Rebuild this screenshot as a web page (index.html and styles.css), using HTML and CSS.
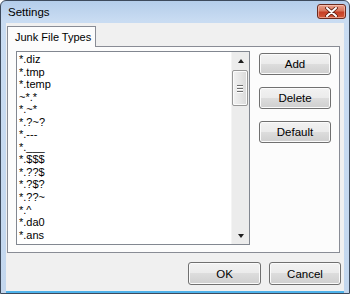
FILE: index.html
```html
<html>

<head>
    <title>Settings</title>
    <link rel="stylesheet" href="styles.css">
</head>

<body>

    <div class="window">
        <div class="titlebar">
            <span class="title">Settings</span>
            <button class="close">
                <svg width="13" height="10" viewBox="0 0 13 10">
                    <path d="M2 1 L11 9 M11 1 L2 9" stroke="#5a1d12" stroke-width="3.6" stroke-linecap="round"/>
                    <path d="M2 1 L11 9 M11 1 L2 9" stroke="#ffffff" stroke-width="2" stroke-linecap="round"/>
                </svg>
            </button>
        </div>

        <div class="client">
            <div class="tabs">
                <div class="tab active">Junk File Types</div>
            </div>

            <div class="panel">
                <div class="listbox">
                    <ul class="items">
                        <li>*.diz</li>
                        <li>*.tmp</li>
                        <li>*.temp</li>
                        <li>~*.*</li>
                        <li>*.~*</li>
                        <li>*.?~?</li>
                        <li>*.---</li>
                        <li>*.___</li>
                        <li>*.$$$</li>
                        <li>*.??$</li>
                        <li>*.?$?</li>
                        <li>*.??~</li>
                        <li>*.^</li>
                        <li>*.da0</li>
                        <li>*.ans</li>
                    </ul>
                    <div class="scrollbar">
                        <div class="arrow"><span class="tri up"></span></div>
                        <div class="track">
                            <div class="thumb">
                                <span class="grip"></span>
                                <span class="grip"></span>
                                <span class="grip"></span>
                            </div>
                        </div>
                        <div class="arrow"><span class="tri down"></span></div>
                    </div>
                </div>

                <div class="side-buttons">
                    <button class="btn">Add</button>
                    <button class="btn">Delete</button>
                    <button class="btn">Default</button>
                </div>
            </div>

            <div class="footer">
                <button class="btn ok">OK</button>
                <button class="btn cancel">Cancel</button>
            </div>
        </div>
    </div>

</body>

</html>
```

FILE: styles.css
```css
body {
    margin: 0;
    background-color: #ffffff;
    font-family: 'Liberation Sans', Arial, sans-serif;
    font-size: 11px;
}

.window {
    box-sizing: border-box;
    width: 350px;
    height: 294px;
    display: flex;
    flex-direction: column;
    border: 1px solid #3d4a5c;
    border-radius: 6px 6px 0 0;
    background: linear-gradient(to bottom, #b4cdea 0px, #c9dcf2 20px, #c3d7ee 100%);
    padding: 0 5px 0 5px;
}

.titlebar {
    height: 22px;
    display: flex;
    justify-content: space-between;
    align-items: flex-start;
    padding: 0 0 0 2px;
    margin-right: -2px;
}

.title {
    margin-top: 5px;
    font-size: 11.5px;
    color: #000000;
}

.close {
    margin-top: 3px;
    width: 29px;
    height: 15px;
    padding: 0;
    border: 1px solid #6b2a1e;
    border-radius: 3px;
    background: linear-gradient(to bottom, #e9a08c 0%, #d8765c 45%, #c63f26 55%, #d35a3a 100%);
    box-shadow: inset 0 0 0 1px rgba(255, 220, 210, 0.5);
    display: flex;
    align-items: center;
    justify-content: center;
}

.client {
    flex: 1;
    display: flex;
    flex-direction: column;
    background-color: #f0f0f0;
    padding: 3px 3px 5px 1px;
    border-bottom: 2px solid #4fb2ea;
}

.tabs {
    display: flex;
    height: 20px;
}

.tab {
    box-sizing: border-box;
    width: 89px;
    height: 21px;
    padding-top: 4px;
    padding-left: 7px;
    border: 1px solid #898c95;
    border-bottom: none;
    background-color: #fcfcfc;
    position: relative;
    z-index: 1;
    color: #000000;
}

.panel {
    box-sizing: border-box;
    height: 207px;
    width: 333px;
    display: flex;
    align-items: flex-start;
    gap: 9px;
    padding: 4px 0 0 8px;
    border: 1px solid #898c95;
    background-color: #fcfcfc;
}

.listbox {
    box-sizing: border-box;
    width: 234px;
    height: 194px;
    display: flex;
    border: 1px solid #828790;
    background-color: #ffffff;
    overflow: hidden;
}

.items {
    flex: 1;
    list-style: none;
    margin: 0;
    padding: 1px 0 0 2px;
    line-height: 12.55px;
    color: #000000;
    overflow: hidden;
}

.scrollbar {
    width: 17px;
    display: flex;
    flex-direction: column;
    background-color: #ececec;
    border-left: 1px solid #f4f4f4;
}

.arrow {
    height: 17px;
    display: flex;
    align-items: center;
    justify-content: center;
}

.tri {
    width: 0;
    height: 0;
    border-left: 3.5px solid transparent;
    border-right: 3.5px solid transparent;
}

.tri.up {
    border-bottom: 4px solid #1e1e1e;
}

.tri.down {
    border-top: 4px solid #1e1e1e;
}

.track {
    flex: 1;
}

.thumb {
    box-sizing: border-box;
    margin: 1px 0 0 0;
    width: 16px;
    height: 36px;
    border: 1px solid #979797;
    border-radius: 2px;
    background: linear-gradient(to right, #f2f2f2 0%, #e6e6e6 50%, #d9d9d9 100%);
    box-shadow: inset 0 0 0 1px #fbfbfb;
    display: flex;
    flex-direction: column;
    align-items: center;
    justify-content: center;
    gap: 2px;
}

.grip {
    width: 6px;
    height: 1px;
    background-color: #6d6d6d;
    box-shadow: 0 1px 0 #ffffff;
}

.side-buttons {
    display: flex;
    flex-direction: column;
    gap: 12px;
    margin-top: 2px;
}

.btn {
    box-sizing: border-box;
    width: 72px;
    height: 22px;
    padding: 0;
    border: 1px solid #707070;
    border-radius: 3px;
    background: linear-gradient(to bottom, #f2f2f2 0%, #ebebeb 50%, #dddddd 50%, #cfcfcf 100%);
    box-shadow: inset 0 0 0 1px #fbfbfb;
    font-family: 'Liberation Sans', Arial, sans-serif;
    font-size: 11.5px;
    color: #000000;
}

.footer {
    display: flex;
    justify-content: flex-end;
    gap: 8px;
    margin-top: 9px;
}

.footer .btn {
    height: 23px;
}

.ok {
    width: 73px;
}
```
